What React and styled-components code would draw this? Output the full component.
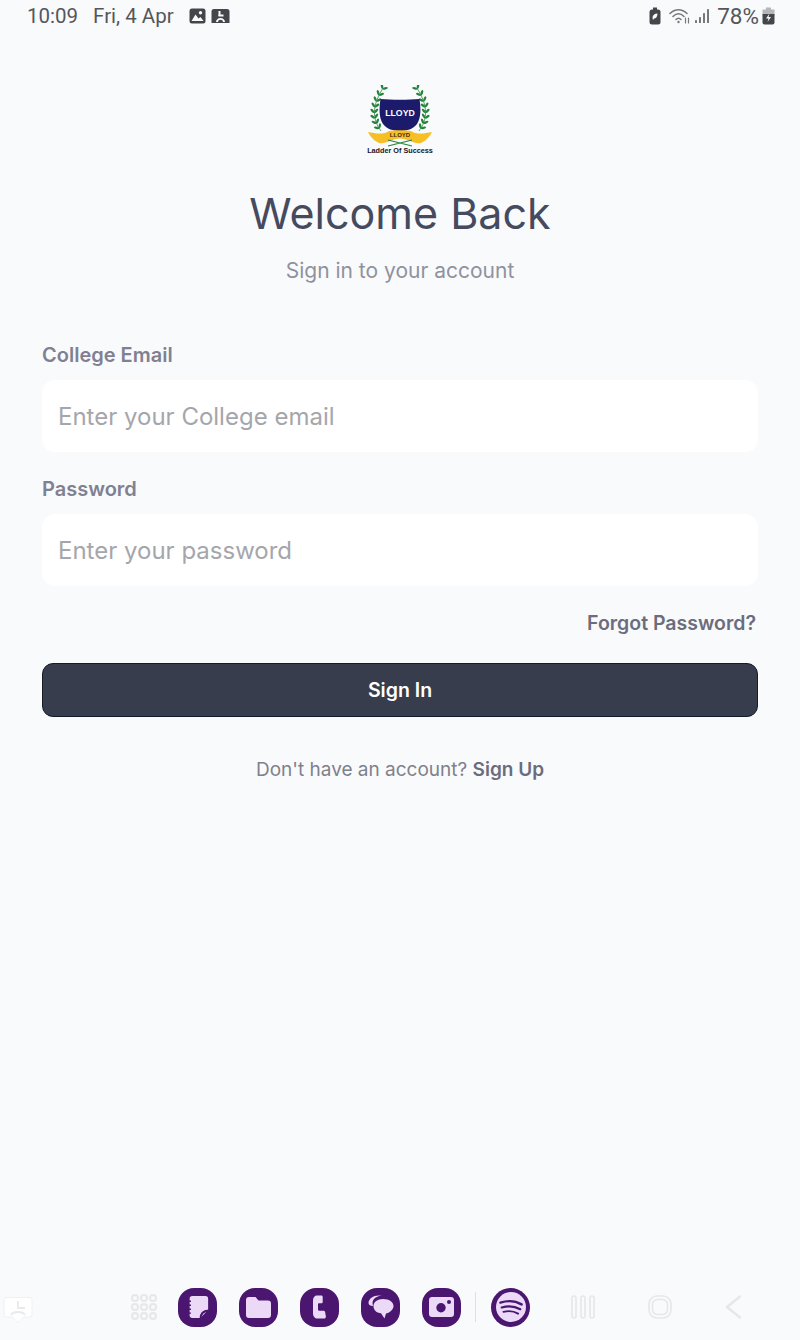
import React from 'react';
import styled, { createGlobalStyle } from 'styled-components';

const Global = createGlobalStyle`
  html, body { margin: 0; padding: 0; background: #f9fafc; }
  body { font-family: Inter, "Liberation Sans", sans-serif; }
  * { box-sizing: border-box; }
`;

const Page = styled.div`
  width: 800px;
  height: 1340px;
  display: flex;
  flex-direction: column;
  overflow: hidden;
  background: #f9fafc;
`;

const StatusBar = styled.div`
  height: 32px;
  padding: 0 25px 0 27px;
  display: flex;
  align-items: center;
  justify-content: space-between;
  color: #55565b;
  font-family: Roboto, sans-serif;
  font-size: 20.5px;
`;

const StatusGroup = styled.div`
  display: flex;
  align-items: center;
  gap: ${(p) => p.$gap || 0}px;
  margin-left: ${(p) => p.$left || 0}px;
`;

const Percent = styled.span`
  font-size: 22.5px;
  margin-left: 4px;
`;

const Main = styled.main`
  flex: 1;
  padding: 53px 42px 0;
  display: flex;
  flex-direction: column;
`;

const Logo = styled.svg`
  display: block;
  align-self: center;
`;

const Title = styled.h1`
  margin: 29px 0 0;
  text-align: center;
  font-size: 43px;
  line-height: 54px;
  font-weight: 400;
  color: #464a5e;
`;

const Subtitle = styled.p`
  margin: 17px 0 0;
  text-align: center;
  font-size: 21px;
  line-height: 28px;
  color: #8f929e;
`;

const Form = styled.form`
  margin-top: 58px;
  display: flex;
  flex-direction: column;
`;

const Label = styled.label`
  display: block;
  font-size: 20px;
  line-height: 24px;
  font-weight: 600;
  color: #7f8192;
  margin: ${(p) => (p.$first ? '0 0 13px' : '25px 0 13px')};
`;

const Input = styled.input`
  display: block;
  width: 100%;
  height: 72px;
  padding: 0 16px;
  border: none;
  outline: none;
  border-radius: 13px;
  background: #ffffff;
  font-family: inherit;
  font-size: 24px;
  &::placeholder { color: #a5a6ab; opacity: 1; }
`;

const Forgot = styled.a`
  align-self: flex-end;
  margin: 25px 2px 0 0;
  font-size: 19.5px;
  line-height: 24px;
  font-weight: 600;
  color: #6b6d7c;
`;

const SubmitButton = styled.button`
  margin-top: 28px;
  height: 54px;
  width: 100%;
  border: 1px solid #161b29;
  border-radius: 11px;
  background: #373d4c;
  color: #ffffff;
  font-family: inherit;
  font-size: 19.5px;
  font-weight: 600;
`;

const Footer = styled.p`
  margin: 41px 0 0;
  text-align: center;
  font-size: 19px;
  line-height: 24px;
  color: #7f818b;
`;

const FooterLink = styled.a`
  font-weight: 600;
  color: #6b6d7c;
`;

const NavBar = styled.nav`
  height: 60px;
  padding: 0 0 6px;
  display: flex;
  align-items: center;
`;

const EdgeHandle = styled.div`
  width: 131px;
  padding: 6px 0 0 3px;
  display: flex;
`;

const Dock = styled.div`
  display: flex;
  align-items: center;
  gap: 22px;
`;

const AppsSlot = styled.div`
  width: 26px;
  margin-right: -1px;
  display: flex;
`;

const Divider = styled.div`
  width: 1px;
  height: 30px;
  background: #dfe0e4;
  margin: 0 -7px 0 -8px;
`;

const SysButtons = styled.div`
  margin-left: 41px;
  display: flex;
  align-items: center;
  gap: 53px;
`;

const AppBadge = styled.div`
  width: 39px;
  height: 39px;
  border-radius: ${(p) => (p.$round ? '50%' : '16px')};
  background: #4a1670;
  display: flex;
  align-items: center;
  justify-content: center;
`;

const LILAC = '#ebd9f7';
const PURPLE = '#4a1670';
const GREY = '#e6e7ea';

const PhotoIcon = () => (
  <svg width="17" height="16" viewBox="0 0 17 16">
    <rect x="0.5" y="0.5" width="16" height="15" rx="2.5" fill="#45464b" />
    <circle cx="11.5" cy="4.8" r="1.7" fill="#f9fafc" />
    <path d="M2.5 13 L6.5 6.5 L9.5 10.5 L11.5 9 L14.5 13 Z" fill="#f9fafc" />
  </svg>
);

const SaveIcon = () => (
  <svg width="19" height="16" viewBox="0 0 19 16">
    <path d="M3 1h13a2.5 2.5 0 0 1 2.5 2.5V15H.5V3.5A2.5 2.5 0 0 1 3 1z" fill="#45464b" />
    <rect x="7.5" y="3" width="2" height="5" fill="#f9fafc" />
    <rect x="7.5" y="6.500" width="5" height="2" fill="#f9fafc" />
    <path d="M5 14a4.5 4 0 0 1 9 0h-2a2.5 2.2 0 0 0-5 0z" fill="#f9fafc" />
  </svg>
);

const BatterySaverIcon = () => (
  <svg width="12" height="18" viewBox="0 0 12 18">
    <rect x="4" y="0.5" width="4" height="2.5" fill="#45464b" />
    <rect x="0.5" y="2.5" width="11" height="15" rx="2.5" fill="#45464b" />
    <path d="M3.5 11c0-3 2-4.5 5-4.5 0 3-1.5 5-3.5 5l-1 1.5z" fill="#f9fafc" />
  </svg>
);

const WifiIcon = () => (
  <svg width="22" height="18" viewBox="0 0 22 18" fill="none" stroke="#77787d" strokeLinecap="round">
    <path d="M1 6.5C6 1.5 13 1.5 18 6.5" strokeWidth="1.6" />
    <path d="M4 9.5C7.5 6 11.5 6 15 9.5" strokeWidth="1.6" />
    <path d="M7 12.5C8.5 11 10.5 11 12 12.5" strokeWidth="1.6" />
    <circle cx="9.5" cy="15" r="1.2" fill="#77787d" stroke="none" />
    <path d="M16.5 11v5M19.5 11v5" strokeWidth="1.2" />
  </svg>
);

const SignalIcon = () => (
  <svg width="15" height="16" viewBox="0 0 15 16" fill="#77787d">
    <rect x="0" y="12" width="2" height="3" rx="0.6" />
    <rect x="4" y="9" width="2" height="6" rx="0.6" />
    <rect x="8" y="5" width="2" height="10" rx="0.6" />
    <rect x="12" y="1" width="2" height="14" rx="0.6" />
  </svg>
);

const BatteryIcon = () => (
  <svg width="13" height="18" viewBox="0 0 13 18">
    <rect x="4" y="0.5" width="5" height="2.5" fill="#b5b6ba" />
    <rect x="0.5" y="2.5" width="12" height="6" fill="#b5b6ba" />
    <path d="M0.5 7h12v8.5a2 2 0 0 1-2 2h-8a2 2 0 0 1-2-2z" fill="#45464b" />
    <path d="M7.5 6.5 L4 11.5h2.5L5.5 15 9 10H6.5z" fill="#f9fafc" />
  </svg>
);

// leaves splay out either side of the stem, following its direction
const laurelLeaves = () => {
  const out = [];
  const p0 = [33, 8];
  const p1 = [2, 56];
  const p2 = [30, 92];
  for (let i = 0; i < 8; i++) {
    const t = i / 7.5;
    const x = (1 - t) * (1 - t) * p0[0] + 2 * t * (1 - t) * p1[0] + t * t * p2[0];
    const y = (1 - t) * (1 - t) * p0[1] + 2 * t * (1 - t) * p1[1] + t * t * p2[1];
    const dx = (1 - t) * (p0[0] - p1[0]) + t * (p1[0] - p2[0]);
    const dy = (1 - t) * (p0[1] - p1[1]) + t * (p1[1] - p2[1]);
    const up = Math.atan2(dy, dx);
    [-0.75, 0.75].forEach((splay) => {
      const a = up + splay;
      out.push({ x: x + Math.cos(a) * 5.5, y: y + Math.sin(a) * 5.5, r: (a * 180) / Math.PI });
    });
  }
  return out;
};

const LaurelBranch = ({ flip }) => (
  <g transform={flip ? 'translate(136 0) scale(-1 1)' : undefined}>
    <path d="M33 8Q2 56 30 92" fill="none" stroke="#1f7d36" strokeWidth="1.4" />
    {laurelLeaves().map(({ x, y, r }) => (
      <ellipse key={`${x}-${y}`} cx={x} cy={y} rx="5.4" ry="2.4" fill="#23843a" transform={`rotate(${r} ${x} ${y})`} />
    ))}
  </g>
);

const LloydLogo = () => (
  <Logo width="68" height="72" viewBox="0 0 136 144">
    <LaurelBranch />
    <LaurelBranch flip />
    <path d="M29 28C50 30 86 30 107 28C110 48 110 66 102 78C94 88 82 92 68 92C54 92 42 88 34 78C26 66 26 48 29 28Z" fill="#1b1a6b" />
    <text x="68" y="62" textAnchor="middle" fontFamily="'Liberation Sans', sans-serif" fontSize="17.5" fontWeight="700" fill="#fff">LLOYD</text>
    <path d="M4 94C20 97 34 100 46 92C54 90 82 90 90 92C102 100 116 97 132 94C128 102 120 112 110 116C96 119 84 107 68 107C52 107 40 119 26 116C16 112 8 102 4 94Z" fill="#f7bf26" />
    <text x="68" y="103" textAnchor="middle" fontFamily="'Liberation Sans', sans-serif" fontSize="12" fontWeight="700" fill="#3c2a10">LLOYD</text>
    <path d="M44 122L92 110M44 110L92 122" stroke="#23843a" strokeWidth="2.4" />
    <text x="68" y="136" textAnchor="middle" fontFamily="'Liberation Sans', sans-serif" fontSize="14.5" fontWeight="700" fill="#16161e">Ladder Of Success</text>
  </Logo>
);

const NotesGlyph = () => (
  <svg width="22" height="24" viewBox="0 0 25 27">
    <path d="M6 1h15a3 3 0 0 1 3 3v13L15 26H6a3 3 0 0 1-3-3V4a3 3 0 0 1 3-3z" fill={LILAC} />
    <path d="M1.5 7h3M1.5 11.5h3M1.5 16h3M1.5 20.5h3" stroke={PURPLE} strokeWidth="1.6" />
    <path d="M15.5 26.5c0-5 2.5-8.5 9-9" stroke={PURPLE} strokeWidth="2.4" fill="none" />
  </svg>
);

const FolderGlyph = () => (
  <svg width="25" height="22" viewBox="0 0 25 22">
    <path d="M3 1h6.5l3 3.5H22a3 3 0 0 1 3 3V19a3 3 0 0 1-3 3H3a3 3 0 0 1-3-3V4a3 3 0 0 1 3-3z" fill={LILAC} />
  </svg>
);

const PhoneGlyph = () => (
  <svg width="13" height="24" viewBox="0 0 13 24">
    <path d="M4 .5H8.200c1 0 1.500.6 1.500 1.500v4.800c0 1-.5 1.500-1.500 1.500H6.200C5.300 8.300 5 8.800 5 9.500v5c0 .7.3 1.200 1.200 1.200h3.900c1.100 0 1.700.5 2 1.400l.7 4c.3 1.400-.4 2.400-1.800 2.400H4.500C1.800 23.500 0 21.400 0 18.500V5.500C0 2.600 1.500.5 4 .5z" fill={LILAC} />
  </svg>
);

const ChatGlyph = () => (
  <svg width="26" height="24" viewBox="0 0 26 24">
    <path d="M.5 8C.5 4 5 .5 11 .5h3C9 1.200 4.500 3.500 4.500 8c0 1 .2 2 .7 3C2.500 11 .5 9.800 .5 8z" fill={LILAC} />
    <path d="M15 4C21 4 25.500 6.800 25.500 11S21 18 18 18.400L16.500 23.500 13 18.300C8.500 18 5.500 15 5.500 11S9.500 4 15 4z" fill={LILAC} />
  </svg>
);

const CameraGlyph = () => (
  <svg width="25" height="20" viewBox="0 0 25 20">
    <rect x="0" y="0" width="25" height="20" rx="3" fill={LILAC} />
    <circle cx="12" cy="10.700" r="4.700" fill={PURPLE} />
    <circle cx="20" cy="5" r="2" fill={PURPLE} />
  </svg>
);

const SpotifyGlyph = () => (
  <svg width="30" height="30" viewBox="0 0 34 34">
    <circle cx="17" cy="17" r="17" fill={LILAC} />
    <g fill="none" stroke={PURPLE} strokeLinecap="round">
      <path d="M5 12C13 9.500 22 10 29 14" strokeWidth="2.800" />
      <path d="M6.500 17.500C14 15.500 21 16 27.500 19.500" strokeWidth="2.500" />
      <path d="M8.500 22.500C14.500 21 20 21.500 25 24.500" strokeWidth="2.200" />
    </g>
  </svg>
);

const AppsGrid = () => (
  <svg width="26" height="26" viewBox="0 0 26 26" fill="none" stroke={GREY} strokeWidth="2">
    {[4, 13, 22].map((y) =>
      [4, 13, 22].map((x) => <circle key={`${x}-${y}`} cx={x} cy={y} r="3" />)
    )}
  </svg>
);

const ScreenshotHandle = () => (
  <svg width="30" height="28" viewBox="0 0 30 28">
    <path d="M3 1.500h24a2 2 0 0 1 2 2V19a2 2 0 0 1-2 2h-6l-6 5.500L9 21H3a2 2 0 0 1-2-2V3.500a2 2 0 0 1 2-2z" fill="#fff" stroke="#eef0f3" />
    <path d="M15 5v7h7M8 19c2-4 12-4 14 0" fill="none" stroke="#e8eaed" strokeWidth="1.800" />
  </svg>
);

const RecentsIcon = () => (
  <svg width="24" height="24" viewBox="0 0 24 24" fill="none" stroke={GREY} strokeWidth="1.600">
    <rect x="1" y="1" width="4" height="22" rx="2" />
    <rect x="10" y="1" width="4" height="22" rx="2" />
    <rect x="19" y="1" width="4" height="22" rx="2" />
  </svg>
);

const HomeIcon = () => (
  <svg width="24" height="24" viewBox="0 0 24 24" fill="none" stroke={GREY} strokeWidth="1.600">
    <rect x="1" y="1" width="22" height="22" rx="8" />
    <rect x="4.500" y="4.500" width="15" height="15" rx="5" />
  </svg>
);

const BackIcon = () => (
  <svg width="18" height="24" viewBox="0 0 18 24" fill="none" stroke={GREY} strokeWidth="2.400" strokeLinejoin="round" strokeLinecap="round">
    <path d="M15 1.500L2 12l13 10.500" />
  </svg>
);

export default function App() {
  return (
    <Page>
      <Global />
      <StatusBar>
        <StatusGroup>
          <span>10:09</span>
          <StatusGroup $left={15}>
            <span>Fri, 4 Apr</span>
          </StatusGroup>
          <StatusGroup $gap={5} $left={15}>
            <PhotoIcon />
            <SaveIcon />
          </StatusGroup>
        </StatusGroup>
        <StatusGroup $gap={3}>
          <BatterySaverIcon />
          <StatusGroup $gap={4} $left={5}>
            <WifiIcon />
            <SignalIcon />
          </StatusGroup>
          <Percent>78%</Percent>
          <BatteryIcon />
        </StatusGroup>
      </StatusBar>
      <Main>
        <LloydLogo />
        <Title>Welcome Back</Title>
        <Subtitle>Sign in to your account</Subtitle>
        <Form onSubmit={(e) => e.preventDefault()}>
          <Label $first htmlFor="email">College Email</Label>
          <Input id="email" placeholder="Enter your College email" />
          <Label htmlFor="password">Password</Label>
          <Input id="password" type="password" placeholder="Enter your password" />
          <Forgot>Forgot Password?</Forgot>
          <SubmitButton type="submit">Sign In</SubmitButton>
        </Form>
        <Footer>
          Don't have an account? <FooterLink>Sign Up</FooterLink>
        </Footer>
      </Main>
      <NavBar>
        <EdgeHandle><ScreenshotHandle /></EdgeHandle>
        <Dock>
          <AppsSlot><AppsGrid /></AppsSlot>
          <AppBadge><NotesGlyph /></AppBadge>
          <AppBadge><FolderGlyph /></AppBadge>
          <AppBadge><PhoneGlyph /></AppBadge>
          <AppBadge><ChatGlyph /></AppBadge>
          <AppBadge><CameraGlyph /></AppBadge>
          <Divider />
          <AppBadge $round><SpotifyGlyph /></AppBadge>
        </Dock>
        <SysButtons>
          <RecentsIcon />
          <HomeIcon />
          <BackIcon />
        </SysButtons>
      </NavBar>
    </Page>
  );
}
